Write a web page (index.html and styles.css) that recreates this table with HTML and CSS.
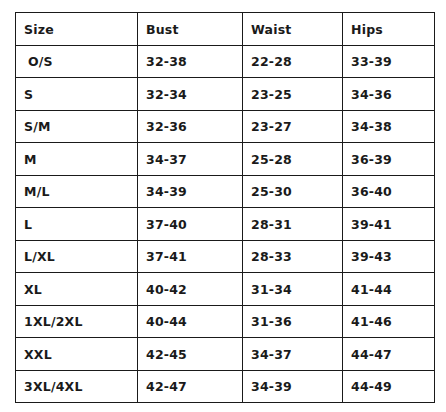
FILE: index.html
```html
<!DOCTYPE html>
<html>
<head>
<meta charset="utf-8">
<link rel="stylesheet" href="styles.css">
</head>
<body>
<table class="size-chart">
  <colgroup>
    <col class="c1"><col class="c2"><col class="c3"><col class="c4">
  </colgroup>
  <tr><td>Size</td><td>Bust</td><td>Waist</td><td>Hips</td></tr>
  <tr><td class="indent">O/S</td><td>32-38</td><td>22-28</td><td>33-39</td></tr>
  <tr><td>S</td><td>32-34</td><td>23-25</td><td>34-36</td></tr>
  <tr><td>S/M</td><td>32-36</td><td>23-27</td><td>34-38</td></tr>
  <tr><td>M</td><td>34-37</td><td>25-28</td><td>36-39</td></tr>
  <tr><td>M/L</td><td>34-39</td><td>25-30</td><td>36-40</td></tr>
  <tr><td>L</td><td>37-40</td><td>28-31</td><td>39-41</td></tr>
  <tr><td>L/XL</td><td>37-41</td><td>28-33</td><td>39-43</td></tr>
  <tr><td>XL</td><td>40-42</td><td>31-34</td><td>41-44</td></tr>
  <tr><td>1XL/2XL</td><td>40-44</td><td>31-36</td><td>41-46</td></tr>
  <tr><td>XXL</td><td>42-45</td><td>34-37</td><td>44-47</td></tr>
  <tr><td>3XL/4XL</td><td>42-47</td><td>34-39</td><td>44-49</td></tr>
</table>
</body>
</html>
```
FILE: styles.css
```css
html, body {
  margin: 0;
  background: #ffffff;
}
body {
  padding: 12px 0 0 15px;
  font-family: "DejaVu Sans", sans-serif;
  color: #1a1a1a;
}
.size-chart {
  border-collapse: collapse;
  table-layout: fixed;
  width: 419px;
}
.c1 { width: 122px; }
.c2 { width: 105px; }
.c3 { width: 100px; }
.c4 { width: 92px; }
.size-chart td {
  border: 1px solid #1a1a1a;
  height: 31.5px;
  padding: 1px 0 0 8px;
  font-size: 12.5px;
  letter-spacing: 0.2px;
  font-weight: bold;
  vertical-align: middle;
  box-sizing: border-box;
}
.size-chart tr { height: 32.5px; }
.size-chart td.indent { padding-left: 12px; }
```
